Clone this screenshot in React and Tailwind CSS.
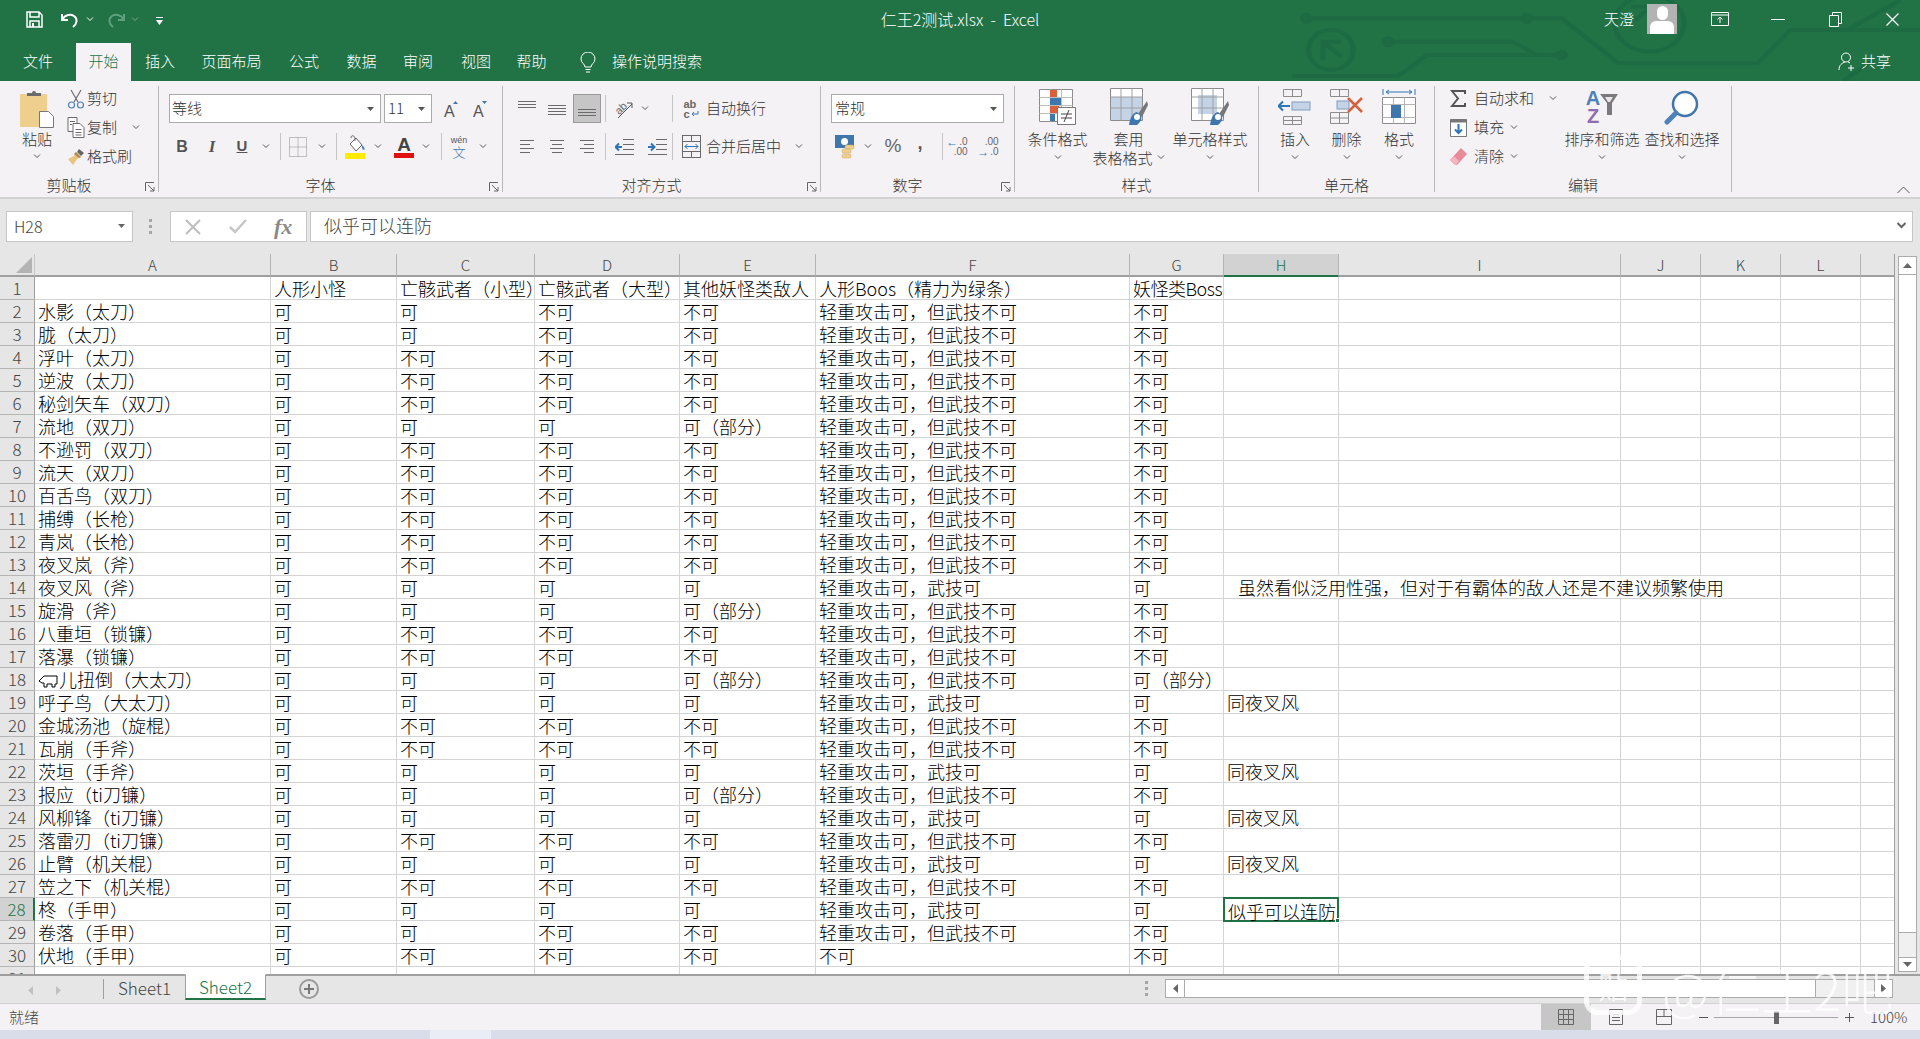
import React from "react";

const LIGHT = "轻重攻击可，但武技不可";
const FULL = "轻重攻击可，武技可";
const SAME = "同夜叉风";
const PART = "可（部分）";

// A, B, C, D, E, F, G, H
const ROWS = [
  ["", "人形小怪", "亡骸武者（小型）", "亡骸武者（大型）", "其他妖怪类敌人", "人形Boos（精力为绿条）", "妖怪类Boss", ""],
  ["水影（太刀）", "可", "可", "不可", "不可", LIGHT, "不可", ""],
  ["胧（太刀）", "可", "可", "不可", "不可", LIGHT, "不可", ""],
  ["浮叶（太刀）", "可", "不可", "不可", "不可", LIGHT, "不可", ""],
  ["逆波（太刀）", "可", "不可", "不可", "不可", LIGHT, "不可", ""],
  ["秘剑矢车（双刀）", "可", "不可", "不可", "不可", LIGHT, "不可", ""],
  ["流地（双刀）", "可", "可", "可", PART, LIGHT, "不可", ""],
  ["不逊罚（双刀）", "可", "不可", "不可", "不可", LIGHT, "不可", ""],
  ["流天（双刀）", "可", "不可", "不可", "不可", LIGHT, "不可", ""],
  ["百舌鸟（双刀）", "可", "不可", "不可", "不可", LIGHT, "不可", ""],
  ["捕缚（长枪）", "可", "不可", "不可", "不可", LIGHT, "不可", ""],
  ["青岚（长枪）", "可", "不可", "不可", "不可", LIGHT, "不可", ""],
  ["夜叉岚（斧）", "可", "不可", "不可", "不可", LIGHT, "不可", ""],
  ["夜叉风（斧）", "可", "可", "可", "可", FULL, "可", "note"],
  ["旋滑（斧）", "可", "可", "可", PART, LIGHT, "不可", ""],
  ["八重垣（锁镰）", "可", "不可", "不可", "不可", LIGHT, "不可", ""],
  ["落瀑（锁镰）", "可", "不可", "不可", "不可", LIGHT, "不可", ""],
  ["pig", "可", "可", "可", PART, LIGHT, PART, ""],
  ["呼子鸟（大太刀）", "可", "可", "可", "可", FULL, "可", SAME],
  ["金城汤池（旋棍）", "可", "不可", "不可", "不可", LIGHT, "不可", ""],
  ["瓦崩（手斧）", "可", "不可", "不可", "不可", LIGHT, "不可", ""],
  ["茨垣（手斧）", "可", "可", "可", "可", FULL, "可", SAME],
  ["报应（ti刀镰）", "可", "可", "可", PART, LIGHT, "不可", ""],
  ["风柳锋（ti刀镰）", "可", "可", "可", "可", FULL, "可", SAME],
  ["落雷刃（ti刀镰）", "可", "不可", "不可", "不可", LIGHT, "不可", ""],
  ["止臂（机关棍）", "可", "可", "可", "可", FULL, "可", SAME],
  ["笠之下（机关棍）", "可", "不可", "不可", "不可", LIGHT, "不可", ""],
  ["柊（手甲）", "可", "可", "可", "可", FULL, "可", "似乎可以连防"],
  ["卷落（手甲）", "可", "可", "不可", "不可", LIGHT, "不可", ""],
  ["伏地（手甲）", "可", "不可", "不可", "不可", "不可", "不可", ""],
  ["", "", "", "", "", "", "", ""],
];

const COL_NAMES = ["A", "B", "C", "D", "E", "F", "G", "H", "I", "J", "K", "L"];

const Chev = ({ className = "" }) => (
  <svg width="8" height="5" viewBox="0 0 8 5" className={className} fill="none" stroke="#555" strokeWidth="1"><path d="M1 .5l3 3 3-3" /></svg>
);

const Slot = ({ w, children }) => <div className={`flex h-full items-center justify-center ${w}`}>{children}</div>;

const VSep = () => <div className="h-[27px] w-px shrink-0 bg-[#c6c6c6]" />;

const GroupSep = () => <div className="my-[5px] h-[106px] w-px shrink-0 bg-[#b8b8b8]" />;

const Launcher = () => (
  <svg width="10" height="10" viewBox="0 0 10 10" className="absolute bottom-[2px] right-[3px]" fill="none" stroke="#666" strokeWidth="1"><path d="M.5 9V.5H9M3 3l6 6M9 5v4H5" /></svg>
);

const Group = ({ w, label, launcher, children }) => (
  <div className={`flex h-full shrink-0 flex-col pt-[3px] ${w}`}>
    <div className="h-[92px]">{children}</div>
    <div className={`relative flex h-[18px] items-center justify-center text-[15px] leading-[18px] text-[#333] ${launcher ? "pr-[20px]" : ""}`}>
      {label}
      {launcher && <Launcher />}
    </div>
  </div>
);

const BigBtn = ({ w, icon, lines, inlineChev }) => (
  <div className={`flex h-full flex-col items-center ${w}`}>
    <div className="flex h-[45px] items-center justify-center">{icon}</div>
    <div className="whitespace-nowrap text-[15px] leading-[19px] text-[#333]">{lines[0]}</div>
    {lines[1] ? (
      <div className="flex items-center gap-[4px] whitespace-nowrap text-[15px] leading-[19px] text-[#333]">{lines[1]}{inlineChev && <Chev />}</div>
    ) : (
      <div className="flex h-[19px] items-center"><Chev /></div>
    )}
  </div>
);

const SmallBtn = ({ icon, label, chevGap }) => (
  <div className="flex h-[29px] items-center">
    <div className="flex w-[23px] items-center justify-center">{icon}</div>
    <span className="-mt-[2px] text-[15px] leading-[19px] text-[#333]">{label}</span>
    {chevGap && <Chev className={chevGap} />}
  </div>
);

const Lines = ({ rows }) => (
  <svg width="20" height="20" viewBox="0 0 20 20" stroke="#6a6a6a" strokeWidth="1">
    {rows.map((r, i) => <path key={i} d={`M${r[0]} ${r[1]}.5H${r[2]}`} />)}
  </svg>
);

const PasteIcon = () => (
  <svg width="36" height="40" viewBox="0 0 36 40">
    <rect x="1" y="5" width="27" height="33" rx="1" fill="#efcf8e" />
    <path d="M8 7V4h5a2 2 0 014 0h5v3z" fill="#6b6b6b" />
    <path d="M20.500 22.500h9l5 5v11h-14z" fill="#fff" stroke="#777" />
  </svg>
);

const ScissorsIcon = () => (
  <svg width="18" height="20" viewBox="0 0 18 20" fill="none" stroke="#6b6b6b" strokeWidth="1.2">
    <path d="M4 1l7 12M14 1L7 13" />
    <circle cx="4.500" cy="16" r="3" stroke="#4d82b8" />
    <circle cx="13.500" cy="16" r="3" stroke="#4d82b8" />
  </svg>
);

const CopyIcon = () => (
  <svg width="18" height="21" viewBox="0 0 18 21" fill="#fff" stroke="#6b6b6b">
    <path d="M1 .5h9v14H1z" />
    <path d="M6 6.500h7l4 4v10H6z" />
    <path d="M3 4.500h5M3 7.500h2M8.500 12.500h6M8.500 15.500h6M8.500 18h6" fill="none" />
  </svg>
);

const BrushIcon = () => (
  <svg width="18" height="18" viewBox="0 0 18 18">
    <path d="M12 1l5 4-3 3-4-4z" fill="#666" />
    <path d="M9 4l5 5-4 2-4 6-5-6 6-3z" fill="#eac37e" />
    <path d="M9 4l5 5-2 1-5-4z" fill="#b18a4f" />
  </svg>
);

const FontA = ({ up }) => (
  <svg width="15" height="18" viewBox="0 0 15 18">
    <text x="0" y="17" fontSize="16" fill="#555" fontFamily="Liberation Sans">A</text>
    <path d={up ? "M9 4l2.500-3L14 4z" : "M9 1l2.500 3L14 1z"} fill="#3f76ad" />
  </svg>
);

const BorderIcon = () => (
  <svg width="18" height="20" viewBox="0 0 18 20" fill="none" stroke="#8c8c8c" strokeDasharray="1 1">
    <path d="M.5.500h17v19H.5zM9 .5v19M.5 10h17" />
  </svg>
);

const FillIcon = () => (
  <svg width="21" height="25" viewBox="0 0 21 25">
    <path d="M5 10l6-6 6 7-6 6z" fill="#fff" stroke="#666" />
    <path d="M6 4c0-3 3-3 4 0v3" fill="none" stroke="#666" />
    <path d="M17 11c2 2 3 3 2.500 5-2 0-3-2-2.500-5z" fill="#4d82b8" />
    <rect x="0" y="19" width="20" height="6" fill="#ffeb00" />
  </svg>
);

const ColorA = () => (
  <div className="flex flex-col items-center">
    <span className="font-['Liberation_Sans'] text-[19px] font-bold leading-[17px] text-[#444]">A</span>
    <div className="h-[5px] w-[20px] bg-[#e01010]" />
  </div>
);

const WenIcon = () => (
  <div className="flex flex-col items-center leading-none">
    <span className="font-['Liberation_Sans'] text-[9px] leading-[9px] text-[#555]">wén</span>
    <span className="text-[13px] leading-[13px] text-[#3f76ad]">文</span>
  </div>
);

const OrientIcon = () => (
  <svg width="19" height="20" viewBox="0 0 19 20" fill="none" stroke="#666">
    <text x="1" y="14" fontSize="11" fill="#666" stroke="none" transform="rotate(-45 6 10)" fontFamily="Liberation Sans">ab</text>
    <path d="M4 19L18 5M13 4h5v5" stroke="#555" />
  </svg>
);

const WrapIcon = () => (
  <div className="relative flex w-[18px] flex-col font-['Liberation_Sans'] text-[11px] font-bold leading-[10px] text-[#666]">
    <span>ab</span>
    <span className="flex items-center">c<svg width="9" height="8" viewBox="0 0 9 8" fill="none" stroke="#3f76ad"><path d="M8 1v3H2M4 2L2 4l2 2" /></svg></span>
  </div>
);

const IndentIcon = ({ out }) => (
  <svg width="19" height="18" viewBox="0 0 19 18" fill="none" stroke="#6a6a6a">
    <path d="M8 1.500h11M8 6.500h11M8 11.500h11M0 16.500h19" />
    <path d={out ? "M7 9H1M4 5.500L.5 9 4 12.500" : "M0 9h6M3 5.500L6.500 9 3 12.500"} stroke="#2f75b5" strokeWidth="2" />
  </svg>
);

const MergeIcon = () => (
  <svg width="19" height="23" viewBox="0 0 19 23" fill="none" stroke="#6a6a6a">
    <rect x=".5" y=".5" width="18" height="22" />
    <path d="M.5 6.500h18M.5 16.500h18M9.500 .5v6M9.500 16.500v6" />
    <path d="M3 11.500h13M5.500 9L3 11.500 5.500 14M13.500 9l2.500 2.500-2.500 2.500" stroke="#2f75b5" />
  </svg>
);

const MoneyIcon = () => (
  <svg width="20" height="24" viewBox="0 0 20 24">
    <rect x="0" y="0" width="19" height="13" fill="#3f76ad" />
    <circle cx="9.500" cy="6.500" r="3.500" fill="#fff" />
    <rect x="10" y="10" width="9" height="4" rx="1.500" fill="#efcf8e" stroke="#c9a25a" strokeWidth=".5" />
    <rect x="7" y="14" width="9" height="4" rx="1.500" fill="#efcf8e" stroke="#c9a25a" strokeWidth=".5" />
    <rect x="7" y="19" width="9" height="4" rx="1.500" fill="#efcf8e" stroke="#c9a25a" strokeWidth=".5" />
  </svg>
);

const DecIcon = ({ more }) => (
  <div className="flex flex-col font-['Liberation_Sans'] text-[10px] leading-[10px] text-[#666]">
    <span className="flex items-center justify-end gap-[1px]">{more ? <span className="text-[12px] font-bold text-[#3f76ad]">←</span> : null}{more ? ".0" : ".00"}</span>
    <span className="flex items-center justify-end gap-[1px]">{more ? null : <span className="text-[12px] font-bold text-[#3f76ad]">→</span>}{more ? ".00" : ".0"}</span>
  </div>
);

const CondIcon = () => (
  <svg width="38" height="36" viewBox="0 0 38 36">
    <path d="M.5.500h33v32H.5z" fill="#fff" stroke="#8c8c8c" />
    <path d="M11.500 .5v32M22.500 .5v32M.5 8.500h33M.5 16.500h33M.5 24.500h33" stroke="#bdbdbd" fill="none" />
    <rect x="11" y="1" width="7" height="7" fill="#d9603b" />
    <rect x="11" y="9" width="11" height="7" fill="#3f76ad" />
    <rect x="11" y="17" width="9" height="7" fill="#d9603b" />
    <rect x="11" y="25" width="5" height="7" fill="#3f76ad" />
    <path d="M18.500 18.500h18v17h-18z" fill="#fff" stroke="#777" />
    <path d="M22 25h11M22 29h11M30 21l-5 12" stroke="#444" fill="none" />
  </svg>
);

const TableIcon = ({ cell }) => (
  <svg width="38" height="38" viewBox="0 0 38 38">
    <path d="M.5.500h32v32H.5z" fill="#fff" stroke="#8c8c8c" />
    {cell ? (
      <rect x="7" y="7" width="19" height="19" fill="#c5d3e6" />
    ) : (
      <rect x="1" y="9" width="31" height="23" fill="#c5d3e6" />
    )}
    <path d="M11 .5v32M22 .5v32M.5 9h32M.5 20h32" stroke="#a0a0a0" fill="none" />
    <path d="M37 13l-9 13 4 3 6-12z" fill="#777" />
    <path d="M27 24c-4 1-7 5-8 13h8c3-3 5-5 4-9z" fill="#3f76ad" />
    <circle cx="27" cy="29" r="3" fill="#fff" />
  </svg>
);

const InsertIcon = () => (
  <svg width="34" height="36" viewBox="0 0 34 36" fill="none">
    <path d="M5.500.5h18v7h-18zM14.500 .5v7M5.500 27.500h18v8h-18zM14.500 27.500v8M5.500 31.500h18" stroke="#8c8c8c" />
    <rect x="14" y="13" width="18" height="8" fill="#c5d3e6" stroke="#7f9cc0" />
    <path d="M1 17h11M5 12.500L.5 17 5 21.500" stroke="#2f75b5" strokeWidth="2" />
  </svg>
);

const DeleteIcon = () => (
  <svg width="36" height="36" viewBox="0 0 36 36" fill="none">
    <path d="M1.500.5h18v7h-18zM10.500 .5v7M1.500 23.500h18v11h-18zM10.500 23.500v11M1.500 29h18" stroke="#8c8c8c" />
    <rect x="8" y="12" width="12" height="8" fill="#c5d3e6" stroke="#7f9cc0" />
    <path d="M19 9l14 14M33 9L19 23" stroke="#d9603b" strokeWidth="2.500" />
  </svg>
);

const FormatIcon = () => (
  <svg width="34" height="38" viewBox="0 0 34 38" fill="none">
    <path d="M1 1v6M33 1v6M4 4h26M4 4l3-2M4 4l3 2M30 4l-3-2M30 4l-3 2" stroke="#2f75b5" />
    <path d="M.5 9.500h33v26H.5z" fill="#fff" stroke="#8c8c8c" />
    <path d="M11.500 9.500v26M22.500 9.500v26M.5 16.500h33M.5 29.500h33" stroke="#b5b5b5" />
    <rect x="9" y="17" width="10" height="13" fill="#3f76ad" />
  </svg>
);

const SumIcon = () => (
  <svg width="17" height="17" viewBox="0 0 17 17" fill="none" stroke="#555" strokeWidth="2"><path d="M15 4V1H2l6 7.500L2 16h13v-3" /></svg>
);

const FillDownIcon = () => (
  <svg width="17" height="18" viewBox="0 0 17 18" fill="none">
    <path d="M.5.500h16v17H.5z" fill="#fff" stroke="#777" />
    <path d="M.5 .5h16v3H.5z" fill="#777" />
    <path d="M8.500 5v9M5 10.500l3.500 3.500 3.500-3.500" stroke="#2f75b5" strokeWidth="2" />
  </svg>
);

const EraserIcon = () => (
  <svg width="17" height="17" viewBox="0 0 17 17"><path d="M11 0l6 6-10 11H5l-5-5z" fill="#e98a98" /><path d="M4 8l5 5-3 4H5l-5-5z" fill="#f2b6bf" /></svg>
);

const SortIcon = () => (
  <div className="flex items-center">
    <div className="flex flex-col items-center font-['Liberation_Sans'] text-[20px] font-bold leading-[18px]">
      <span className="text-[#4d82b8]">A</span>
      <span className="text-[#8f6bb0]">Z</span>
    </div>
    <svg width="18" height="21" viewBox="0 0 18 21" className="-mt-[5px]"><path d="M0 0h18l-6 9v12H7V9z" fill="#7a7a7a" /><path d="M5 3h8l-3 5H8z" fill="#e6e6e6" /></svg>
  </div>
);

const FindIcon = () => (
  <svg width="36" height="36" viewBox="0 0 36 36" fill="none">
    <circle cx="21" cy="15" r="12" stroke="#3f76ad" strokeWidth="2.500" fill="#fff" />
    <path d="M12 24L3 33" stroke="#4d82b8" strokeWidth="5" strokeLinecap="round" />
  </svg>
);

const PigGlyph = () => (
  <svg width="20" height="14" viewBox="0 0 20 14" fill="none" stroke="#000" className="mr-[1px] inline-block align-[-1px]">
    <path d="M1 7l5-5h13v8h-2v3h-3v-3H9v3H6v-4H4z" />
  </svg>
);

const TitleBar = () => (
  <div className="relative grid h-[43px] grid-cols-[1fr_auto_1fr] items-center pb-[5px] text-white">
    <div className="flex items-center">
      <Slot w="w-[26px]" />
      <svg width="17" height="17" viewBox="0 0 17 17" fill="none" stroke="#fff" strokeWidth="1.500"><path d="M1 1h12l3 3v12H1z" /><path d="M4 1v5h9V1M4 16v-6h9v6" /><rect x="6" y="12" width="2" height="4" fill="#fff" stroke="none" /></svg>
      <svg width="19" height="17" viewBox="0 0 19 17" fill="none" stroke="#fff" strokeWidth="2" className="ml-[18px]"><path d="M1 3v6h6M1.500 8.500C4 3 10 3 13 5c4 3 3 8-1 11" /></svg>
      <Chev className="ml-[6px] [&>path]:stroke-white" />
      <svg width="19" height="17" viewBox="0 0 19 17" fill="none" stroke="#5fa17f" strokeWidth="2" className="ml-[12px]"><path d="M18 3v6h-6M17.500 8.500C15 3 9 3 6 5c-4 3-3 8 1 11" /></svg>
      <Chev className="ml-[6px] opacity-40 [&>path]:stroke-white" />
      <svg width="8" height="9" viewBox="0 0 8 9" fill="#fff" className="ml-[17px] mt-[4px]"><rect y="0" width="7" height="1" /><path d="M0 3h7L3.500 8z" /></svg>
    </div>
    <div className="relative whitespace-pre text-[16px]">仁王2测试.xlsx  -  Excel</div>
    <div className="relative flex items-center justify-end pr-[21px]">
      <span className="text-[15px]">天澄</span>
      <div className="ml-[13px] flex h-[30px] w-[30px] flex-col items-center justify-end overflow-hidden bg-[#b3b3b3]">
        <div className="h-[14px] w-[11px] rounded-full bg-white" />
        <div className="mt-[1px] h-[13px] w-[24px] rounded-t-[6px] bg-white" />
      </div>
      <svg width="18" height="14" viewBox="0 0 18 14" fill="none" stroke="#fff" className="ml-[34px]"><path d="M.5 .5h17v13H.5zM.5 3h17" /><path d="M9 11V5M6.500 7.500L9 5l2.500 2.500" /></svg>
      <div className="ml-[42px] h-px w-[14px] bg-white" />
      <svg width="13" height="15" viewBox="0 0 13 15" fill="none" stroke="#fff" className="ml-[44px]"><path d="M.5 3.500h9v11h-9zM3.500 3V.5h9v11H10" /></svg>
      <svg width="13" height="13" viewBox="0 0 13 13" fill="none" stroke="#fff" strokeWidth="1.200" className="ml-[44px]"><path d="M.5.500l12 12M12.500.5l-12 12" /></svg>
    </div>
  </div>
);

const MENU_TABS = [
  ["文件", "w-[76px]"], ["开始", "w-[55px]"], ["插入", "w-[58px]"], ["页面布局", "w-[85px]"], ["公式", "w-[60px]"],
  ["数据", "w-[55px]"], ["审阅", "w-[58px]"], ["视图", "w-[58px]"], ["帮助", "w-[53px]"],
];

const TabRow = () => (
  <div className="relative flex h-[38px] text-[15px] text-white">
    {MENU_TABS.map(([name, w]) => (
      <div key={name} className={`flex items-center justify-center pb-[2px] ${w} ${name === "开始" ? "bg-[#f5f2f6] text-[#217346]" : ""}`}>{name}</div>
    ))}
    <svg width="16" height="22" viewBox="0 0 16 22" fill="none" stroke="#fff" className="ml-[22px] mt-[9px]"><path d="M5 15c0-3-4-4-4-8a7 7 0 0114 0c0 4-4 5-4 8zM5.500 17.500h5M6 20h4" /></svg>
    <div className="ml-[16px] flex items-center pb-[2px]">操作说明搜索</div>
    <div className="ml-auto flex items-center pb-[2px] pr-[29px]">
      <svg width="17" height="19" viewBox="0 0 17 19" fill="none" stroke="#fff" className="mr-[6px]"><circle cx="8" cy="5.500" r="4.500" /><path d="M1 18c0-5 3-7 6-8M10 10l2 1M10 16h6M13 13v6" /></svg>
      共享
    </div>
  </div>
);

const Ribbon = () => (
  <div className="flex h-[116px] bg-[#f5f2f6]">
    <Group w="w-[158px]" label="剪贴板" launcher>
      <div className="flex h-full pl-[18px]">
        <div className="flex w-[38px] flex-col items-center">
          <div className="pt-[5px]"><PasteIcon /></div>
          <div className="whitespace-nowrap text-[15px] leading-[19px] text-[#333]">粘贴</div>
          <div className="flex h-[17px] items-center"><Chev /></div>
        </div>
        <div className="ml-[8px] flex flex-col">
          <SmallBtn icon={<ScissorsIcon />} label="剪切" />
          <SmallBtn icon={<CopyIcon />} label="复制" chevGap="ml-[15px]" />
          <SmallBtn icon={<BrushIcon />} label="格式刷" />
        </div>
      </div>
    </Group>
    <GroupSep />
    <Group w="w-[343px]" label="字体" launcher>
      <div className="flex h-[29px] pl-[10px] mt-[10px] items-center">
        <div className="flex h-full w-[212px] items-center justify-between border border-[#ababab] bg-white pl-[2px] pr-[6px] text-[15px] text-[#333]">等线<svg width="7" height="4" viewBox="0 0 7 4" fill="#555"><path d="M0 0h7L3.500 4z" /></svg></div>
        <div className="ml-[3px] flex h-full w-[48px] items-center justify-between border border-[#ababab] bg-white pl-[3px] pr-[6px] text-[15px] text-[#333]">11<svg width="7" height="4" viewBox="0 0 7 4" fill="#555"><path d="M0 0h7L3.500 4z" /></svg></div>
        <div className="ml-[12px]"><FontA up /></div>
        <div className="ml-[14px]"><FontA /></div>
      </div>
      <div className="mt-[9px] flex h-[29px] items-center pl-[8px]">
        <Slot w="w-[30px]"><span className="font-['Liberation_Sans'] text-[16px] font-bold text-[#555]">B</span></Slot>
        <Slot w="w-[30px]"><span className="font-['Liberation_Serif'] text-[17px] font-bold italic text-[#555]">I</span></Slot>
        <Slot w="w-[30px]"><span className="font-['Liberation_Sans'] text-[15px] font-bold text-[#555] underline">U</span></Slot>
        <Slot w="w-[18px]"><Chev /></Slot>
        <div className="w-[5px]" /><VSep />
        <Slot w="w-[34px]"><BorderIcon /></Slot>
        <Slot w="w-[14px]"><Chev /></Slot>
        <div className="w-[7px]" /><VSep />
        <Slot w="w-[36px]"><FillIcon /></Slot>
        <Slot w="w-[10px]"><Chev /></Slot>
        <div className="w-[6px]" />
        <Slot w="w-[30px]"><ColorA /></Slot>
        <Slot w="w-[14px]"><Chev /></Slot>
        <div className="w-[8px]" /><VSep />
        <Slot w="w-[34px]"><WenIcon /></Slot>
        <Slot w="w-[14px]"><Chev /></Slot>
      </div>
    </Group>
    <GroupSep />
    <Group w="w-[317px]" label="对齐方式" launcher>
      <div className="mt-[10px] flex h-[29px] items-center pl-[9px]">
        <Slot w="w-[30px]"><Lines rows={[[1, 2, 19], [1, 5, 19], [1, 8, 19]]} /></Slot>
        <Slot w="w-[30px]"><Lines rows={[[1, 6, 19], [1, 9, 19], [1, 12, 19], [1, 15, 19]]} /></Slot>
        <div className="ml-[1px] flex h-full w-[28px] items-center justify-center border border-[#9a9a9a] bg-[#c6c6c6]"><Lines rows={[[1, 10, 19], [1, 13, 19], [1, 16, 19]]} /></div>
        <div className="w-[4px]" /><VSep />
        <Slot w="w-[34px]"><OrientIcon /></Slot>
        <Slot w="w-[10px]"><Chev /></Slot>
        <div className="w-[22px]" /><VSep />
        <Slot w="w-[33px] pl-[6px]"><WrapIcon /></Slot>
        <span className="text-[15px] text-[#333]">自动换行</span>
      </div>
      <div className="mt-[9px] flex h-[29px] items-center pl-[9px]">
        <Slot w="w-[30px]"><Lines rows={[[3, 3, 17], [3, 7, 13], [3, 11, 17], [3, 15, 13]]} /></Slot>
        <Slot w="w-[30px]"><Lines rows={[[3, 3, 17], [5, 7, 15], [3, 11, 17], [5, 15, 15]]} /></Slot>
        <Slot w="w-[30px]"><Lines rows={[[3, 3, 17], [7, 7, 17], [3, 11, 17], [7, 15, 17]]} /></Slot>
        <div className="w-[3px]" /><VSep />
        <Slot w="w-[36px]"><IndentIcon out /></Slot>
        <Slot w="w-[30px]"><IndentIcon /></Slot>
        <VSep />
        <Slot w="w-[33px] pl-[4px]"><MergeIcon /></Slot>
        <span className="text-[15px] text-[#333]">合并后居中</span>
        <Chev className="ml-[14px]" />
      </div>
    </Group>
    <GroupSep />
    <Group w="w-[193px]" label="数字" launcher>
      <div className="mt-[10px] flex h-[29px] pl-[10px]">
        <div className="flex h-full w-[173px] items-center justify-between border border-[#ababab] bg-white pl-[3px] pr-[6px] text-[15px] text-[#333]">常规<svg width="7" height="4" viewBox="0 0 7 4" fill="#555"><path d="M0 0h7L3.500 4z" /></svg></div>
      </div>
      <div className="mt-[9px] flex h-[29px] items-center pl-[9px]">
        <Slot w="w-[30px]"><MoneyIcon /></Slot>
        <Slot w="w-[16px]"><Chev /></Slot>
        <Slot w="w-[34px]"><span className="font-['Liberation_Sans'] text-[19px] text-[#666]">%</span></Slot>
        <Slot w="w-[20px]"><span className="-mt-[8px] font-['Liberation_Sans'] text-[18px] font-bold leading-[8px] text-[#555]">,</span></Slot>
        <div className="w-[12px]" /><VSep />
        <Slot w="w-[28px]"><DecIcon more /></Slot>
        <div className="w-[2px]" />
        <Slot w="w-[30px]"><DecIcon /></Slot>
      </div>
    </Group>
    <GroupSep />
    <Group w="w-[243px]" label="样式">
      <div className="flex h-full pl-[10px]">
        <BigBtn w="w-[65px]" icon={<CondIcon />} lines={["条件格式"]} />
        <BigBtn w="w-[77px]" icon={<TableIcon />} lines={["套用", "表格格式"]} inlineChev />
        <BigBtn w="w-[86px]" icon={<TableIcon cell />} lines={["单元格样式"]} />
      </div>
    </Group>
    <GroupSep />
    <Group w="w-[175px]" label="单元格">
      <div className="flex h-full pl-[11px]">
        <BigBtn w="w-[50px]" icon={<InsertIcon />} lines={["插入"]} />
        <BigBtn w="w-[53px]" icon={<DeleteIcon />} lines={["删除"]} />
        <BigBtn w="w-[52px]" icon={<FormatIcon />} lines={["格式"]} />
      </div>
    </Group>
    <GroupSep />
    <Group w="w-[296px]" label="编辑">
      <div className="flex h-full pl-[15px]">
        <div className="flex w-[112px] flex-col">
          <div className="flex h-[29px] items-center"><div className="flex w-[24px]"><SumIcon /></div><span className="-mt-[1px] text-[15px] text-[#333]">自动求和</span><Chev className="ml-[15px]" /></div>
          <div className="flex h-[29px] items-center"><div className="flex w-[24px]"><FillDownIcon /></div><span className="-mt-[1px] text-[15px] text-[#333]">填充</span><Chev className="ml-[6px]" /></div>
          <div className="flex h-[29px] items-center"><div className="flex w-[24px]"><EraserIcon /></div><span className="-mt-[1px] text-[15px] text-[#333]">清除</span><Chev className="ml-[6px]" /></div>
        </div>
        <BigBtn w="w-[80px]" icon={<SortIcon />} lines={["排序和筛选"]} />
        <BigBtn w="w-[80px]" icon={<FindIcon />} lines={["查找和选择"]} />
      </div>
    </Group>
    <GroupSep />
    <div className="flex flex-1 items-end justify-end pb-[3px] pr-[10px]">
      <svg width="13" height="8" viewBox="0 0 13 8" fill="none" stroke="#555"><path d="M.5 7L6.500 1l6 6" /></svg>
    </div>
  </div>
);

const FormulaBar = () => (
  <div className="flex h-[57px] border-t-2 border-[#d2d2d2] bg-[#e6e6e6] pt-[12px]">
    <div className="ml-[6px] flex h-[31px] w-[127px] items-center justify-between border border-[#c6c6c6] bg-white pb-[2px] pl-[7px] pr-[7px] text-[16px] text-[#444]">H28<svg width="7" height="4" viewBox="0 0 7 4" fill="#666"><path d="M0 0h7L3.500 4z" /></svg></div>
    <div className="ml-[16px] mr-[18px] flex h-[31px] flex-col justify-center gap-[3px]">
      <div className="h-[3px] w-[3px] bg-[#a6a6a6]" /><div className="h-[3px] w-[3px] bg-[#a6a6a6]" /><div className="h-[3px] w-[3px] bg-[#a6a6a6]" />
    </div>
    <div className="flex h-[31px] w-[137px] items-center border border-[#c6c6c6] bg-white">
      <svg width="16" height="16" viewBox="0 0 16 16" fill="none" stroke="#bdbdbd" strokeWidth="2" className="ml-[14px]"><path d="M1 1l14 14M15 1L1 15" /></svg>
      <svg width="18" height="15" viewBox="0 0 18 15" fill="none" stroke="#c6c6c6" strokeWidth="2.500" className="ml-[28px]"><path d="M1 8l5 5L17 1" /></svg>
      <span className="ml-[27px] font-['Liberation_Serif'] text-[22px] font-bold italic leading-none text-[#8a8a8a]">fx</span>
    </div>
    <div className="ml-[3px] flex h-[31px] flex-1 items-center justify-between border border-[#c6c6c6] bg-white pb-[2px] pl-[13px] pr-[6px] text-[18px] text-[#444]">
      似乎可以连防
      <svg width="9" height="7" viewBox="0 0 9 7" fill="none" stroke="#666" strokeWidth="2"><path d="M.5 1l4 4 4-4" /></svg>
    </div>
    <div className="w-[7px]" />
  </div>
);

const Sheet = () => (
  <div className="flex h-[720px] bg-[#e6e6e6]">
    <div className="h-full w-[1895px] shrink-0 overflow-hidden border-r border-[#9f9f9f] bg-white">
      <div className="grid w-[1895px] grid-cols-[35px_236px_126px_138px_145px_136px_314px_94px_115px_282px_80px_80px_80px_34px] auto-rows-[23px] text-[18px] leading-[22px] text-black [text-spacing-trim:space-all]">
        <div className="flex h-[23px] items-end justify-end border-b-2 border-r border-b-[#9f9f9f] border-r-[#c6c6c6] bg-[#e6e6e6] pb-[2px] pr-[2px]">
          <svg width="16" height="16" viewBox="0 0 16 16" fill="#b4b4b4"><path d="M16 0v16H0z" /></svg>
        </div>
        {COL_NAMES.map(name => (
          <div key={name} className={`flex items-center justify-center border-b-2 border-r border-r-[#b5b5b5] text-[15px] ${name === "H" ? "border-b-[#217346] bg-[#d2d2d2] text-[#217346]" : "border-b-[#9f9f9f] bg-[#e6e6e6] text-[#444]"}`}>{name}</div>
        ))}
        <div className="border-b-2 border-b-[#9f9f9f] bg-[#e6e6e6]" />
        {ROWS.map((row, i) => (
          <React.Fragment key={i}>
            <div className={`flex items-center justify-center border-b border-r text-[17px] ${i === 27 ? "border-b-[#b5b5b5] border-r-2 border-r-[#217346] bg-[#d2d2d2] text-[#217346]" : "border-b-[#b5b5b5] border-r-[#9f9f9f] bg-[#e6e6e6] text-[#444]"}`}>{i + 1}</div>
            {row.slice(0, 7).map((text, c) => (
              <div key={c} className={`min-w-0 whitespace-nowrap border-b border-r border-[#d4d4d4] px-[3px] ${text === "妖怪类Boss" ? "tracking-[-0.5px]" : ""}`}>
                {text === "pig" ? <><PigGlyph />儿扭倒（大太刀）</> : text}
              </div>
            ))}
            {row[7] === "note" ? (
              <div className="col-span-4 whitespace-nowrap border-b border-r border-[#d4d4d4] pl-[14px]">虽然看似泛用性强，但对于有霸体的敌人还是不建议频繁使用</div>
            ) : i === 27 ? (
              <div className="relative -mb-px -ml-px -mt-px whitespace-nowrap border-2 border-[#217346] pl-[3px] pt-px">
                {row[7]}
                <div className="absolute -bottom-[3px] -right-[3px] h-[5px] w-[5px] border border-white bg-[#217346]" />
              </div>
            ) : (
              <div className="whitespace-nowrap border-b border-r border-[#d4d4d4] px-[3px]">{row[7]}</div>
            )}
            {row[7] !== "note" && (
              <>
                <div className="border-b border-r border-[#d4d4d4]" />
                <div className="border-b border-r border-[#d4d4d4]" />
                <div className="border-b border-r border-[#d4d4d4]" />
              </>
            )}
            <div className="border-b border-r border-[#d4d4d4]" />
            <div className="border-b border-[#d4d4d4]" />
          </React.Fragment>
        ))}
      </div>
    </div>
    <div className="ml-[3px] mt-[2px] flex h-[716px] w-[19px] flex-col border border-[#ababab] bg-white">
      <div className="flex h-[18px] items-center justify-center border-b border-[#ababab]"><svg width="9" height="5" viewBox="0 0 9 5" fill="#666"><path d="M0 5h9L4.500 0z" /></svg></div>
      <div className="h-[658px] border-b border-[#ababab]" />
      <div className="flex-1 bg-[#f0f0f0]" />
      <div className="flex h-[14px] items-center justify-center border-t border-[#ababab] bg-white"><svg width="9" height="5" viewBox="0 0 9 5" fill="#666"><path d="M0 0h9L4.500 5z" /></svg></div>
    </div>
  </div>
);

const SheetTabs = () => (
  <div className="flex h-[29px] border-t-2 border-[#9f9f9f] bg-[#e6e6e6]">
    <svg width="5" height="9" viewBox="0 0 5 9" fill="#c0c0c0" className="ml-[28px] mt-[10px]"><path d="M5 0v9L0 4.500z" /></svg>
    <svg width="5" height="9" viewBox="0 0 5 9" fill="#c0c0c0" className="ml-[23px] mt-[10px]"><path d="M0 0v9l5-4.500z" /></svg>
    <div className="ml-[42px] mt-[3px] h-[20px] w-px bg-[#9f9f9f]" />
    <div className="flex h-[24px] w-[81px] items-center justify-center text-[17px] text-[#444]">Sheet1</div>
    <div className="-mt-[2px] flex h-[26px] w-[81px] items-center justify-center border-x border-t border-x-[#9f9f9f] border-t-white border-b-2 border-b-[#217346] bg-white text-[17px] text-[#217346]">Sheet2</div>
    <div className="ml-[33px] mt-[3px] flex h-[20px] w-[20px] items-center justify-center rounded-full border-2 border-[#9a9a9a] text-[#777]">
      <svg width="10" height="10" viewBox="0 0 10 10" stroke="#777" strokeWidth="2"><path d="M5 0v10M0 5h10" /></svg>
    </div>
    <div className="ml-[826px] mt-[5px] flex flex-col gap-[3px]">
      <div className="h-[3px] w-[3px] bg-[#a6a6a6]" /><div className="h-[3px] w-[3px] bg-[#a6a6a6]" /><div className="h-[3px] w-[3px] bg-[#a6a6a6]" />
    </div>
    <div className="ml-[17px] mt-[3px] flex h-[19px] w-[728px] border border-[#ababab] bg-[#f0f0f0]">
      <div className="flex w-[19px] items-center justify-center border-r border-[#ababab] bg-white"><svg width="5" height="9" viewBox="0 0 5 9" fill="#666"><path d="M5 0v9L0 4.500z" /></svg></div>
      <div className="w-[631px] border-r border-[#ababab] bg-white" />
      <div className="flex-1" />
      <div className="flex w-[18px] items-center justify-center border-l border-[#ababab] bg-white"><svg width="5" height="9" viewBox="0 0 5 9" fill="#666"><path d="M0 0v9l5-4.500z" /></svg></div>
    </div>
  </div>
);

const StatusBar = () => (
  <div className="flex h-[27px] items-center border-t border-[#d2d2d2] bg-[#f5f2f6] text-[15px] text-[#444]">
    <span className="ml-[9px]">就绪</span>
    <div className="ml-[1502px] flex h-full w-[50px] items-center justify-center bg-[#c6c6c6]">
      <svg width="16" height="16" viewBox="0 0 16 16" fill="none" stroke="#666"><path d="M.5.500h15v15H.5zM5.500 .5v15M10.500 .5v15M.5 5.500h15M.5 10.500h15" /></svg>
    </div>
    <svg width="14" height="16" viewBox="0 0 14 16" fill="none" stroke="#666" className="ml-[18px]"><path d="M.5.500h13v15H.5zM3 5.500h8M3 8.500h8M3 11.500h8" /></svg>
    <svg width="16" height="16" viewBox="0 0 16 16" fill="none" stroke="#666" className="ml-[33px]"><path d="M.5.500h15v15H.5zM8 .5v7H.5M8 7.500h7.500" /></svg>
    <div className="ml-[27px] h-px w-[9px] bg-[#555]" />
    <div className="ml-[6px] flex h-[13px] w-[124px] items-center">
      <div className="h-px w-[60px] bg-[#a6a6a6]" />
      <div className="h-[13px] w-[5px] bg-[#666]" />
      <div className="h-px flex-1 bg-[#a6a6a6]" />
    </div>
    <svg width="9" height="9" viewBox="0 0 9 9" stroke="#555" className="ml-[7px]"><path d="M4.500 0v9M0 4.500h9" /></svg>
    <span className="ml-[16px]">100%</span>
  </div>
);

const CircuitLines = () => (
  <svg width="640" height="81" viewBox="0 0 1568 243" preserveAspectRatio="none" fill="none" stroke="#1d6b42" strokeWidth="12" className="absolute right-0 top-0">
    <path d="M65 55h625l140 135h340l80-100h318" />
    <path d="M265 125h305l60 40h60M630 165H360l-70 63H30" />
    <path d="M1390 90l130-90M1380 243l70-60" />
    <circle cx="65" cy="55" r="10" />
    <circle cx="605" cy="55" r="10" />
    <circle cx="265" cy="125" r="10" />
    <circle cx="690" cy="165" r="10" />
    <ellipse cx="125" cy="150" rx="55" ry="60" />
    <path d="M105 180v-55h45M105 125l45 45" />
    <circle cx="905" cy="70" r="85" />
    <path d="M860 20h50v50M910 20l-40 40" />
  </svg>
);

export default function App() {
  return (
    <div className="relative h-[1039px] w-[1920px] overflow-hidden font-['Noto_Sans_CJK_SC','Liberation_Sans',sans-serif] font-light">
      <div className="relative bg-[#217346]">
        <CircuitLines />
        <TitleBar />
        <TabRow />
      </div>
      <Ribbon />
      <FormulaBar />
      <Sheet />
      <SheetTabs />
      <StatusBar />
      <div className="flex h-[9px] overflow-hidden bg-[#d9dde9]">
        <div className="ml-[430px] h-full w-[61px] bg-[#eaedf5]" />
        <span className="ml-auto mr-[93px] mt-[6px] text-[14px] leading-none text-[#222]">17:00</span>
      </div>
      {/* watermark */}
      <div className="pointer-events-none absolute left-[1584px] top-[955px] flex h-[60px] items-center text-white opacity-80">
        <div className="flex h-[60px] w-[58px] items-center justify-center rounded-[14px] border-[5px] border-white text-[30px] font-normal">贴</div>
        <span className="ml-[20px] mt-[8px] whitespace-nowrap text-[52px] leading-[60px]">@仁王2吧</span>
      </div>
    </div>
  );
}
